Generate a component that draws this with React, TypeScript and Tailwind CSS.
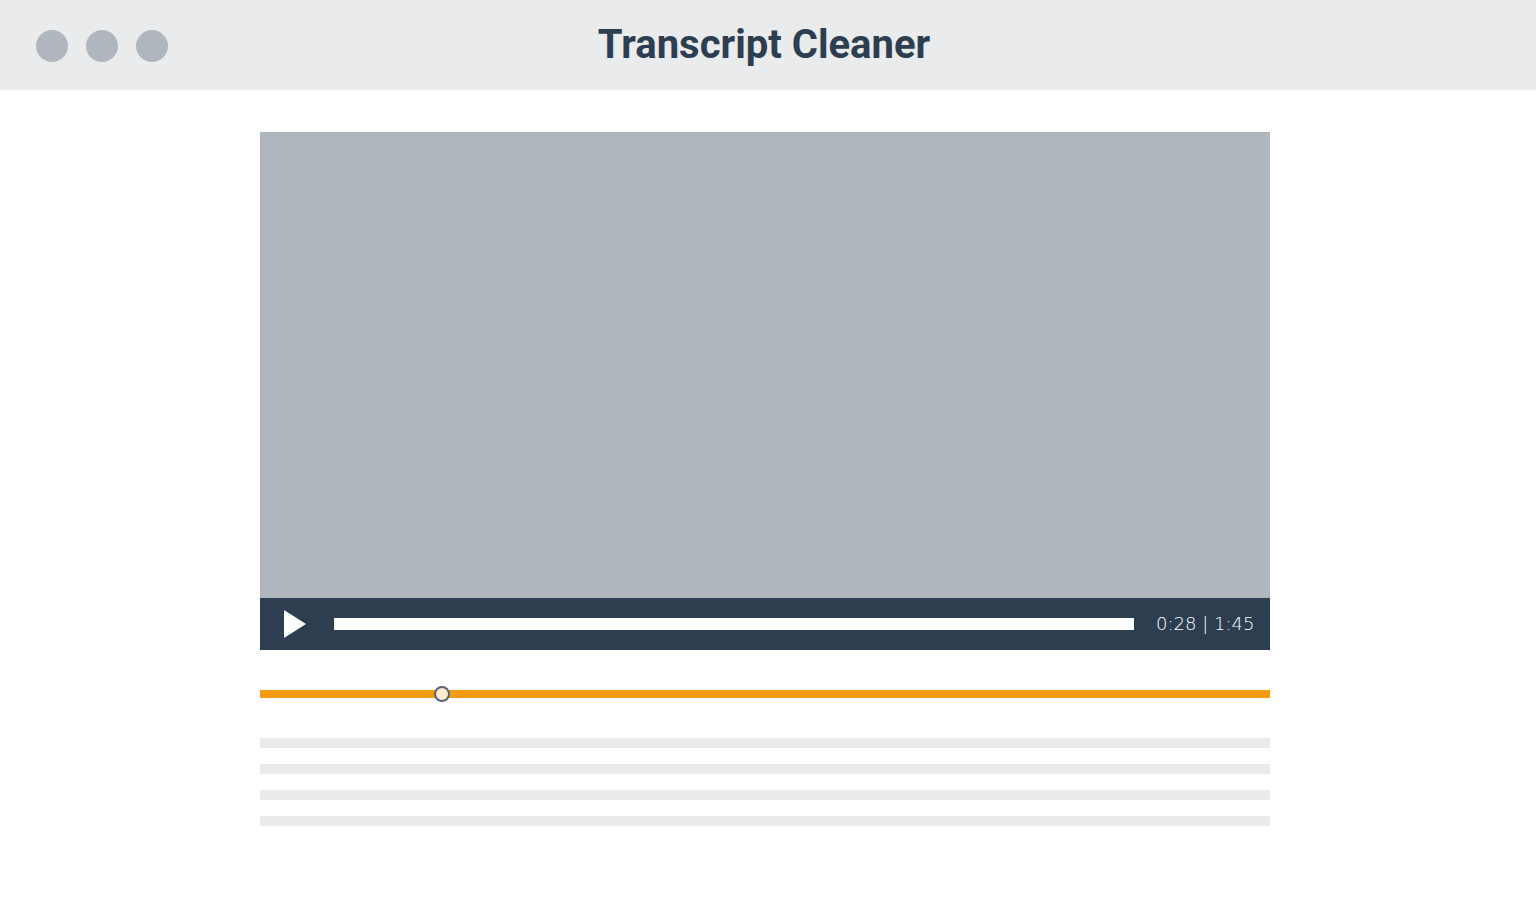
import { useState } from "react";

const transcriptLines = [1, 2, 3, 4];
const duration = 105;

function formatTime(total: number) {
  return `${Math.floor(total / 60)}:${String(total % 60).padStart(2, "0")}`;
}

function WindowDots() {
  return (
    <div className="flex gap-[18px] pt-0.5" aria-hidden="true">
      <span className="size-8 rounded-full bg-[#afb6bd]" />
      <span className="size-8 rounded-full bg-[#afb6bd]" />
      <span className="size-8 rounded-full bg-[#afb6bd]" />
    </div>
  );
}

function Player() {
  const [seconds, setSeconds] = useState(28);
  return (
    <section aria-label="Video player">
      <div className="aspect-[1010/466] bg-[#afb6bd]" />
      <div className="flex h-[52px] items-center bg-[#2d3e50] pr-3.5 pl-6">
        <button type="button" aria-label="Play" className="shrink-0">
          <svg className="block h-7 w-[22px]" viewBox="0 0 22 28" fill="white" aria-hidden="true">
            <path d="M0 0 22 14 0 28Z" />
          </svg>
        </button>
        <input
          type="range"
          aria-label="Seek"
          min={0}
          max={duration}
          value={seconds}
          onChange={(e) => setSeconds(Number(e.target.value))}
          className="mr-[22px] ml-7 h-3 min-w-0 flex-1 appearance-none bg-white [&::-webkit-slider-thumb]:size-3 [&::-webkit-slider-thumb]:appearance-none [&::-webkit-slider-thumb]:bg-white"
        />
        <span className="w-[100px] shrink-0 font-['DejaVu_Sans',sans-serif] text-lg leading-6 font-extralight whitespace-nowrap text-white">
          {`${formatTime(seconds)} | ${formatTime(duration)}`}
        </span>
      </div>
    </section>
  );
}

function TranscriptSlider() {
  const [position, setPosition] = useState(175);
  return (
    <input
      type="range"
      aria-label="Transcript position"
      min={0}
      max={1000}
      value={position}
      onChange={(e) => setPosition(Number(e.target.value))}
      className="mt-9 block h-4 w-full appearance-none bg-transparent [&::-webkit-slider-runnable-track]:h-2 [&::-webkit-slider-runnable-track]:bg-[#f39c12] [&::-webkit-slider-thumb]:-mt-1 [&::-webkit-slider-thumb]:size-4 [&::-webkit-slider-thumb]:appearance-none [&::-webkit-slider-thumb]:rounded-full [&::-webkit-slider-thumb]:border-2 [&::-webkit-slider-thumb]:border-solid [&::-webkit-slider-thumb]:border-[#576574] [&::-webkit-slider-thumb]:bg-[#fdebd0]"
    />
  );
}

export default function App() {
  return (
    <div className="min-h-screen bg-white font-['Roboto',sans-serif]">
      <header className="grid h-[90px] grid-cols-[1fr_auto_1fr] items-center bg-[#e9ebec] pr-11 pl-9">
        <WindowDots />
        <h1 className="text-[40px] leading-[48px] font-bold text-[#2d3e50]">Transcript Cleaner</h1>
      </header>
      <main className="pt-[42px] pr-1.5">
        <div className="mx-auto max-w-[1010px]">
          <Player />
          <TranscriptSlider />
          <div className="mt-9 flex flex-col gap-4" aria-hidden="true">
            {transcriptLines.map((line) => (
              <div key={line} className="h-2.5 bg-[#e9ebec]" />
            ))}
          </div>
        </div>
      </main>
    </div>
  );
}
